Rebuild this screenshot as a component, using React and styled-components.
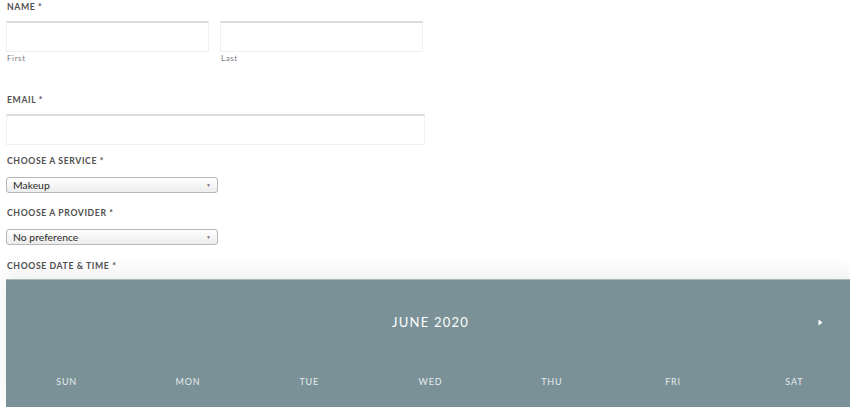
import React from "react"
import styled, { createGlobalStyle } from "styled-components"

const Global = createGlobalStyle`
body {
  margin: 0;
  background: #ffffff;
  font-family: Lato, "Open Sans", sans-serif;
  overflow: hidden;
}
`

const days = ["SUN", "MON", "TUE", "WED", "THU", "FRI", "SAT"]

export default function App() {
    return (
        <Page>
            <Global />
            <Field>
                <Label>NAME *</Label>
                <NameRow>
                    <NameCol>
                        <TextInput />
                        <SubLabel>First</SubLabel>
                    </NameCol>
                    <NameCol>
                        <TextInput />
                        <SubLabel>Last</SubLabel>
                    </NameCol>
                </NameRow>
            </Field>
            <Field $top={30}>
                <Label>EMAIL *</Label>
                <TextInput $width={419} />
            </Field>
            <Field $top={9}>
                <Label>CHOOSE A SERVICE *</Label>
                <Select>
                    <span>Makeup</span>
                    <Caret>▼</Caret>
                </Select>
            </Field>
            <Field $top={13}>
                <Label>CHOOSE A PROVIDER *</Label>
                <Select>
                    <span>No preference</span>
                    <Caret>▼</Caret>
                </Select>
            </Field>
            <Field $top={14}>
                <Label>CHOOSE DATE & TIME *</Label>
            </Field>
            <Calendar>
                <MonthBar>
                    <Month>JUNE 2020</Month>
                    <NextArrow>
                        <svg width="5" height="7" viewBox="0 0 5 7">
                            <path d="M0.5 0.5 L4.5 3.5 L0.5 6.5 Z" fill="#ffffff" />
                        </svg>
                    </NextArrow>
                </MonthBar>
                <DayRow>
                    {days.map((d) => (
                        <Day key={d}>{d}</Day>
                    ))}
                </DayRow>
            </Calendar>
        </Page>
    )
}

const Page = styled.div`
display: flex;
flex-direction: column;
padding: 0 0 0 6px;
width: 844px;
height: 407px;
box-sizing: content-box;
`
const Field = styled.div`
display: flex;
flex-direction: column;
margin-top: ${(p) => p.$top || 0}px;
`
const Label = styled.div`
font-size: 8.7px;
font-weight: bold;
letter-spacing: 0.6px;
color: #505050;
line-height: 12px;
padding-left: 1px;
margin-top: 1px;
margin-bottom: 7px;
`
const NameRow = styled.div`
display: flex;
gap: 11px;
`
const NameCol = styled.div`
display: flex;
flex-direction: column;
`
const TextInput = styled.div`
width: ${(p) => p.$width || 203}px;
height: 31px;
margin-top: 1px;
box-sizing: border-box;
background: #ffffff;
border: 1px solid #f0f0f0;
border-top: 2px solid #dcdcdc;
`
const SubLabel = styled.div`
font-size: 8px;
color: #7a7a7a;
letter-spacing: 0.6px;
line-height: 10px;
margin-top: 1px;
padding-left: 1px;
`
const Select = styled.div`
display: flex;
align-items: center;
justify-content: space-between;
width: 212px;
height: 16px;
margin-top: 3px;
box-sizing: border-box;
border: 1px solid #b8b8b8;
border-radius: 3px;
background: linear-gradient(#ffffff, #ececec);
padding: 0 6px 0 6px;
font-size: 10.4px;
color: #2a2a2a;
span {
  line-height: 14px;
}
`
const Caret = styled.div`
font-size: 5px;
color: #777777;
`
const Calendar = styled.div`
display: flex;
flex-direction: column;
width: 849px;
flex: 1;
background: #7a9197;
border-top: 1px solid #a9b7bb;
box-shadow: 0 -6px 18px rgba(0, 0, 0, 0.07);
`
const MonthBar = styled.div`
position: relative;
display: flex;
justify-content: center;
align-items: center;
height: 84px;
`
const Month = styled.div`
color: #ffffff;
font-size: 13px;
letter-spacing: 1.2px;
`
const NextArrow = styled.div`
position: absolute;
left: 812px;
top: 39px;
display: flex;
`
const DayRow = styled.div`
display: grid;
grid-template-columns: repeat(7, 1fr);
`
const Day = styled.div`
text-align: center;
font-size: 9px;
letter-spacing: 0.8px;
color: #e6eced;
padding-top: 12px;
`
